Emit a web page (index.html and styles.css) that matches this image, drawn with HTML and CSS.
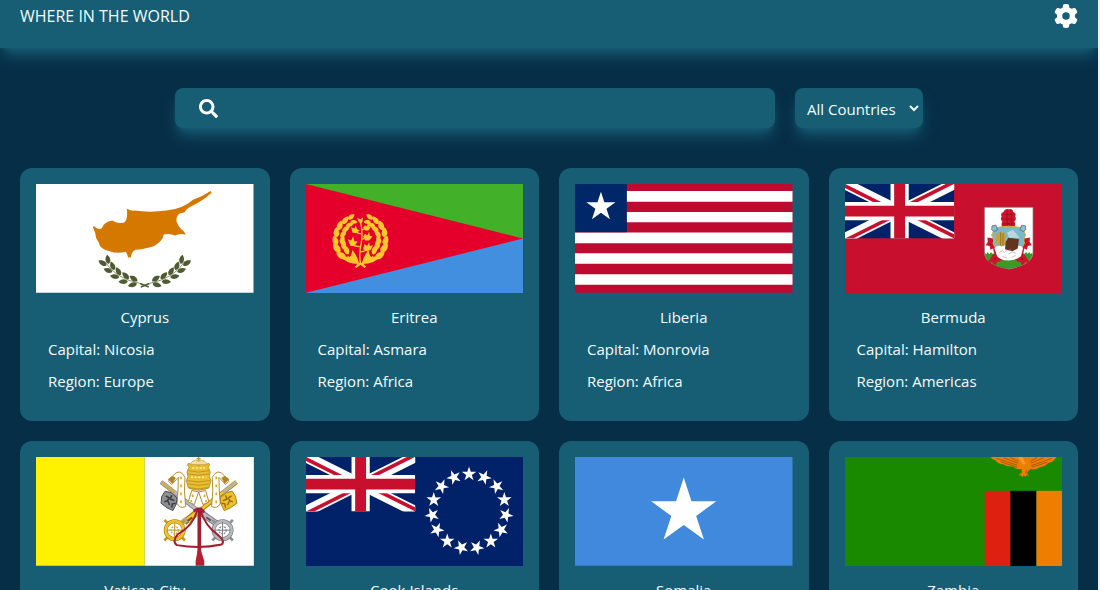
FILE: index.html
```html
<!DOCTYPE html>
<html lang="en">
<head>
<meta charset="utf-8">
<meta name="viewport" content="width=device-width, initial-scale=1">
<title>Where in the World</title>
<link rel="stylesheet" href="styles.css">
</head>
<body>
<svg class="defs" aria-hidden="true">
  <defs>
    <polygon id="star" points="0,-1 .2245,-.309 .951,-.309 .363,.118 .588,.809 0,.382 -.588,.809 -.363,.118 -.951,-.309 -.2245,-.309"/>
    <path id="leaf" d="M0 0C-10 -6 -9 -19 0 -28C9 -19 10 -6 0 0"/>
    <g id="pair">
      <use href="#leaf" transform="translate(-4 0) rotate(-24)"/>
      <use href="#leaf" transform="translate(4 0) rotate(24)"/>
    </g>
    <g id="wide-pair">
      <use href="#leaf" transform="translate(-6 2) rotate(-8) scale(1.2 1.1)"/>
      <use href="#leaf" transform="translate(6 0) rotate(30)"/>
    </g>
    <clipPath id="jack-half"><path d="M30 15h30v15zv15H0zH0V0zV0h30z"/></clipPath>
    <symbol id="jack" viewBox="0 0 60 30">
      <rect width="60" height="30" fill="#012169"/>
      <path d="M0 0L60 30M60 0L0 30" stroke="#fff" stroke-width="6"/>
      <path d="M0 0L60 30M60 0L0 30" stroke="#c8102e" stroke-width="4" clip-path="url(#jack-half)"/>
      <path d="M30 0V30M0 15H60" stroke="#fff" stroke-width="10"/>
      <path d="M30 0V30M0 15H60" stroke="#c8102e" stroke-width="6"/>
    </symbol>
  </defs>
</svg>

<header class="topbar">
  <h1 class="brand">WHERE IN THE WORLD</h1>
  <button class="settings" type="button" aria-label="Settings">
    <svg class="gear" viewBox="0 0 512 512"><path fill="currentColor" d="M495.9 166.6c3.2 8.7 .5 18.4-6.4 24.6l-43.3 39.4c1.1 8.3 1.7 16.8 1.7 25.4s-.6 17.1-1.7 25.4l43.3 39.4c6.9 6.2 9.6 15.9 6.4 24.6c-4.4 11.9-9.7 23.3-15.8 34.3l-4.7 8.1c-6.6 11-14 21.4-22.1 31.2c-5.9 7.2-15.7 9.6-24.5 6.8l-55.7-17.7c-13.4 10.3-28.2 18.9-44 25.4l-12.5 57.1c-2 9.1-9 16.3-18.2 17.8c-13.8 2.3-28 3.5-42.5 3.5s-28.7-1.2-42.5-3.5c-9.2-1.5-16.2-8.7-18.2-17.8l-12.5-57.1c-15.8-6.5-30.6-15.1-44-25.4L83.1 425.9c-8.8 2.8-18.6 .3-24.5-6.8c-8.1-9.8-15.5-20.2-22.1-31.2l-4.7-8.1c-6.1-11-11.4-22.4-15.8-34.3c-3.2-8.7-.5-18.4 6.4-24.6l43.3-39.4C64.6 273.1 64 264.6 64 256s.6-17.1 1.7-25.4L22.4 191.2c-6.9-6.2-9.6-15.9-6.4-24.6c4.4-11.9 9.7-23.3 15.8-34.3l4.7-8.1c6.6-11 14-21.4 22.1-31.2c5.9-7.2 15.7-9.6 24.5-6.8l55.7 17.7c13.4-10.3 28.2-18.9 44-25.4l12.5-57.1c2-9.1 9-16.3 18.2-17.8C227.3 1.2 241.5 0 256 0s28.7 1.2 42.5 3.5c9.2 1.5 16.2 8.7 18.2 17.8l12.5 57.1c15.8 6.5 30.6 15.1 44 25.4l55.7-17.7c8.8-2.8 18.6-.3 24.5 6.8c8.1 9.8 15.5 20.2 22.1 31.2l4.7 8.1c6.1 11 11.4 22.4 15.8 34.3zM256 336a80 80 0 1 0 0-160 80 80 0 1 0 0 160z"/></svg>
  </button>
</header>

<main>
  <form class="filters">
    <label class="search">
      <svg class="lens" viewBox="0 0 512 512" aria-hidden="true"><path fill="currentColor" d="M505 442.7L405.3 343c-4.5-4.5-10.6-7-17-7H372c27.6-35.3 44-79.7 44-128C416 93.1 322.9 0 208 0S0 93.1 0 208s93.1 208 208 208c48.3 0 92.7-16.4 128-44v16.3c0 6.4 2.5 12.5 7 17l99.7 99.7c9.4 9.4 24.6 9.4 33.9 0l28.3-28.3c9.4-9.4 9.4-24.6.1-34zM208 336c-70.7 0-128-57.2-128-128 0-70.7 57.2-128 128-128 70.7 0 128 57.2 128 128 0 70.7-57.2 128-128 128z"/></svg>
      <input class="search-input" type="text" aria-label="Search countries">
    </label>
    <div class="region">
      <select class="region-select" aria-label="Region">
        <option>All Countries</option>
        <option>Africa</option>
        <option>Americas</option>
        <option>Asia</option>
        <option>Europe</option>
        <option>Oceania</option>
      </select>
      <svg class="chevron" viewBox="0 0 10 8" aria-hidden="true"><path d="M1 2L5 6L9 2" fill="none" stroke="currentColor" stroke-width="2"/></svg>
    </div>
  </form>

  <section class="grid" aria-label="Countries">
    <article class="card">
      <svg class="flag" viewBox="48 48 654 327" preserveAspectRatio="xMidYMid slice" role="img" aria-label="Flag of Cyprus">
        <rect x="48" y="48" width="654" height="327" fill="#fff"/>
        <path fill="#d57800" d="M219 177L223 175Q233 187 245 182Q252 162 277 158Q300 170 314 163Q325 155 321 122Q330 130 345 128Q390 135 440 128Q490 122 520 95Q550 85 573 69L576 74Q550 98 515 115Q500 122 495 133L480 137Q468 145 471 162Q478 180 492 190L499 200Q480 195 466 203Q450 195 432 200Q430 220 400 236Q370 245 347 246Q333 255 334 268L325 269Q322 258 318 252Q290 258 270 250Q240 245 237 225Q226 210 226 195Z"/>
        <g transform="translate(375 215)" fill="#4e5b31">
          <g id="olive-left">
            <path d="M12 143L-14 132" fill="none" stroke="#4e5b31" stroke-width="5"/>
            <path d="M-14 132Q-90 116 -120 66" fill="none" stroke="#4e5b31" stroke-width="2"/>
            <use href="#pair" transform="rotate(-80) translate(-131 0)"/>
            <use href="#pair" transform="rotate(-68) translate(-132 0)"/>
            <use href="#pair" transform="rotate(-56) translate(-133 0)"/>
            <use href="#pair" transform="rotate(-45) translate(-134 0)"/>
            <use href="#pair" transform="rotate(-34) translate(-135 0)"/>
          </g>
          <use href="#olive-left" transform="scale(-1 1)"/>
        </g>
      </svg>
      <div class="info">
        <h2 class="name">Cyprus</h2>
        <p class="fact">Capital: Nicosia</p>
        <p class="fact">Region: Europe</p>
      </div>
    </article>

    <article class="card">
      <svg class="flag" viewBox="48 48 651 327" preserveAspectRatio="xMidYMid slice" role="img" aria-label="Flag of Eritrea">
        <rect x="48" y="48" width="654" height="164" fill="#43b02a"/>
        <rect x="48" y="212" width="654" height="164" fill="#418fde"/>
        <path d="M48 49L698 212L48 374Z" fill="#e4002b"/>
        <g transform="translate(211 216)" fill="#ffc72c">
          <g id="wreath">
            <use href="#wide-pair" transform="rotate(-50) translate(-64 0) scale(1.1)"/>
            <use href="#wide-pair" transform="rotate(-30) translate(-65 0) scale(1.1)"/>
            <use href="#wide-pair" transform="rotate(-12) translate(-66 0)"/>
            <use href="#wide-pair" transform="rotate(7) translate(-66 0)"/>
            <use href="#wide-pair" transform="rotate(25) translate(-66 0)"/>
            <use href="#wide-pair" transform="rotate(43) translate(-66 0) scale(.9)"/>
            <use href="#wide-pair" transform="rotate(60) translate(-67 0) scale(.8)"/>
            <path d="M-4 72Q-46 72 -62 46Q-44 54 -36 48Q-30 60 -24 30Q-8 50 -4 72ZM-18 80L8 66L14 80L8 80L2 73L-12 84Z"/>
          </g>
          <use href="#wreath" transform="scale(-1 1)"/>
          <path d="M0 72Q-5 40 2 12Q8 -20 0 -56M0 36Q20 34 23 24M-2 20Q-26 20 -28 6M4 -2Q20 -4 22 -14M3 -18Q-16 -20 -18 -32M3 -30Q16 -32 19 -40" fill="none" stroke="#ffc72c" stroke-width="4"/>
          <path d="M8 28L12 12L20 18L26 6L28 18L38 16L30 30L18 34ZM-38 -2L-28 2L-22 -10L-18 4L-8 4L-18 18L-30 18ZM8 -10L14 -18L20 -12L26 -24L28 -12L36 -10L26 2L14 2ZM-28 -38L-18 -34L-14 -44L-10 -32L-2 -28L-14 -20L-24 -22ZM8 -38L14 -44L18 -40L24 -52L26 -40L32 -40L24 -28L14 -28ZM-10 -66L0 -62L8 -68L6 -54L0 -48L-6 -56Z"/>
        </g>
      </svg>
      <div class="info">
        <h2 class="name">Eritrea</h2>
        <p class="fact">Capital: Asmara</p>
        <p class="fact">Region: Africa</p>
      </div>
    </article>

    <article class="card">
      <svg class="flag" viewBox="45 48 654 327" preserveAspectRatio="xMidYMid slice" role="img" aria-label="Flag of Liberia">
        <rect x="45" y="48" width="654" height="327" fill="#bf0a30"/>
        <path fill="#fff" d="M45 69h654v32H45zM45 132h654v31H45zM45 194h654v32H45zM45 256h654v32H45zM45 319h654v32H45z"/>
        <rect x="45" y="48" width="156" height="145" fill="#002868"/>
        <use href="#star" transform="translate(123 117) scale(46)" fill="#fff"/>
      </svg>
      <div class="info">
        <h2 class="name">Liberia</h2>
        <p class="fact">Capital: Monrovia</p>
        <p class="fact">Region: Africa</p>
      </div>
    </article>

    <article class="card">
      <svg class="flag" viewBox="45 48 651 327" preserveAspectRatio="xMidYMid slice" role="img" aria-label="Flag of Bermuda">
        <rect x="45" y="48" width="654" height="327" fill="#c8102e"/>
        <use href="#jack" x="45" y="48" width="327" height="164"/>
        <path d="M462 118H608V256Q606 290 535 304Q464 290 462 256Z" fill="#fff"/>
        <path d="M463 254l5 5 4-7 5 7 5-6 6 5h94l5-6 5 6 4-6 5 6 5-4q0 38-72 49q-70-11-71-49z" fill="#3c9a24"/>
        <path d="M462 118H608V256Q606 290 535 304Q464 290 462 256Z" fill="none" stroke="#6d5a50" stroke-width="2"/>
        <path d="M535 124q12-2 13 8 12 5 6 14 6 8-2 14 6 12-2 20h-32q-8-8-2-20-8-6-2-14-6-9 6-14 3-10 15-8z" fill="#cf142b"/>
        <path d="M522 140h25M520 154h30M519 168h32M530 128v48M543 132v44" stroke="#8a1020" stroke-width="2"/>
        <path d="M498 206l-10 8-14-2 1 10-5 8 10 2 2 10 8-4 4 18-10 14-8 12 10-2 8 8 6-10 14-4 6-22zM572 206l10 8 14-2-1 10 5 8-10 2-2 10-8-4-4 18 10 14 8 12-10-2-8 8-6-10-14-4-6-22z" fill="#cf142b" stroke="#cf142b" stroke-width="5"/>
        <path d="M485 218l6 12M585 218l-6 12M498 268l-8 10M572 268l8 10M478 228l4 2M592 228l-4 2" stroke="#7d1220" stroke-width="3"/>
        <path d="M494 180q41-10 82 0l10 22q-8 10-4 24l-14 26-33 16-33-16-14-26q4-14-4-24z" fill="#78b9cb" stroke="#d8ae42" stroke-width="3"/>
        <path d="M492 240q14-10 22-4l20-6 20 6q16-6 24 4l-6 24q-10 12-37 14q-27-2-35-14z" fill="#fff"/>
        <path d="M497 200q16-16 29-2l1 32-14 6-16-10z" fill="#c6a13c"/>
        <path d="M511 194v38M518 196v36" stroke="#76631f" stroke-width="2"/>
        <path d="M534 210l32 4-4 28-16 8-22-6 2-22z" fill="#65341f"/>
        <path d="M530 194l18-8 20 24-32 0z" fill="#b9d9dc"/>
        <path d="M524 250l18-4M506 254l10-6 8 8M534 258l12-6 10 4M516 266l14 4M544 268l12-6" fill="none" stroke="#b7a8a0" stroke-width="2"/>
        <path d="M485 174l12-2 4 14-10 5-7-5zM585 174l-12-2-4 14 10 5 7-5z" fill="#8fbfc9" stroke="#37626d" stroke-width="2"/>
        <path d="M484 274l10 6 16-2M586 274l-10 6-16-2" fill="none" stroke="#cf142b" stroke-width="6"/>
      </svg>
      <div class="info">
        <h2 class="name">Bermuda</h2>
        <p class="fact">Capital: Hamilton</p>
        <p class="fact">Region: Americas</p>
      </div>
    </article>

    <article class="card">
      <svg class="flag" viewBox="48 51 654 327" preserveAspectRatio="xMidYMid slice" role="img" aria-label="Flag of Vatican City">
        <rect x="48" y="51" width="327" height="327" fill="#fff200"/>
        <rect x="375" y="51" width="328" height="327" fill="#fff"/>
        <path d="M424 126L534 212" stroke="#8d8d8d" stroke-width="13"/>
        <path d="M426 127L534 211" stroke="#bcbcbc" stroke-width="8"/>
        <path d="M424 126L466 158" stroke="#cfae4c" stroke-width="9"/>
        <path d="M651 126L541 212" stroke="#a97d12" stroke-width="13"/>
        <path d="M649 127L541 211" stroke="#f3c437" stroke-width="8"/>
        <path d="M651 126L610 158" stroke="#b9b5a5" stroke-width="9"/>
        <g id="lappet" fill="#fff" stroke="#b58d2a" stroke-width="3">
          <path d="M459 108L446 124L456 134L476 112Q476 150 472 190Q480 208 498 200Q492 150 496 112Q480 82 459 108Z"/>
          <path d="M516 152L506 186L524 194L537 156Z"/>
          <path d="M446 118l12 12 9-16-9-5z" fill="#a98528"/>
          <path d="M484 110v8M484 134v8M484 158v8M484 182v8M519 164v8M515 180v6" stroke="#d9a91f" stroke-width="5"/>
        </g>
        <use href="#lappet" transform="translate(1074 0) scale(-1 1)"/>
        <path d="M436 154l18 4 18 16-2 18-10 20-18-8-18-14 2-20z" fill="#8e8f93" stroke="#4b4c50" stroke-width="3"/>
        <path d="M438 168l10 6-6 10M456 166l-4 12 12 4M434 186l10-4 6 14M456 204l2-12 10-2" fill="none" stroke="#3f4044" stroke-width="5"/>
        <path d="M638 154l-18 4-18 16 2 18 10 20 18-8 20-14-4-20z" fill="#efc02a" stroke="#a87e13" stroke-width="3"/>
        <path d="M636 168l-10 6 6 10M618 166l4 12-12 4M640 186l-10-4-6 14M618 204l-2-12-10-2" fill="none" stroke="#8e6910" stroke-width="4"/>
        <path d="M508 82q-8-10 0-12l8 5 10-4 11 5 11-5 10 4 8-5q8 2 0 12l6 14-3 14 5 12-6 22q-31 14-62 0l-6-22 5-12-3-14z" fill="#e8bd30" stroke="#9a7515" stroke-width="2"/>
        <path d="M512 74q3-14 25-14t25 14z" fill="#f3dda0" stroke="#c19a2b" stroke-width="2"/>
        <path d="M506 92q31 9 62 0M504 102q33 8 66 0M503 122q34 8 68 0M505 132q32 8 64 0M508 143q29 8 58 0" fill="none" stroke="#a9831b" stroke-width="2"/>
        <path d="M514 112h46M518 84h38" stroke="#fff0ae" stroke-width="5" stroke-dasharray="6 5"/>
        <path d="M537 51v14M531 56h12" stroke="#c79a1f" stroke-width="4"/>
        <path d="M528 220L494 248" stroke="#a57b12" stroke-width="19"/>
        <path d="M528 222L504 242" stroke="#f3c437" stroke-width="15"/>
        <path d="M500 238L484 252" stroke="#aeb0b4" stroke-width="16"/>
        <path d="M504 243l14-10" stroke="#6c5113" stroke-width="6"/>
        <path d="M546 220L592 252" stroke="#77797d" stroke-width="19"/>
        <path d="M548 222L590 250" stroke="#babcc0" stroke-width="14"/>
        <path d="M560 232l14 10" stroke="#55575c" stroke-width="6"/>
        <g fill="none">
          <path d="M434 240l14 14M496 240l-14 14M434 302l14-14M496 302l-14-14" stroke="#c7981d" stroke-width="8"/>
          <circle cx="465" cy="271" r="27" stroke="#a57b12" stroke-width="12"/>
          <circle cx="465" cy="271" r="27" stroke="#f0c12e" stroke-width="9"/>
          <path d="M465 246v50M440 271h50" stroke="#bd942a" stroke-width="3"/>
          <circle cx="465" cy="271" r="11" stroke="#d1a42d" stroke-width="4" stroke-dasharray="5 3"/>
          <path d="M578 240l14 14M640 240l-14 14M578 302l14-14M640 302l-14-14" stroke="#8e9094" stroke-width="8"/>
          <circle cx="609" cy="271" r="27" stroke="#707276" stroke-width="12"/>
          <circle cx="609" cy="271" r="27" stroke="#b6b8bc" stroke-width="9"/>
          <path d="M609 246v50M584 271h50" stroke="#7b7d81" stroke-width="3"/>
          <circle cx="609" cy="271" r="11" stroke="#85878b" stroke-width="4" stroke-dasharray="5 3"/>
          <path d="M533 212Q520 258 474 284Q456 306 472 316Q540 328 606 314Q618 304 596 286Q556 258 543 212" stroke="#a31e31" stroke-width="6"/>
          <path d="M522 214l12-7h10l10 10" stroke="#a31e31" stroke-width="8"/>
          <path d="M539 208V350" stroke="#a31e31" stroke-width="11"/>
        </g>
        <path d="M534 332h10l10 32v14h-26v-14z" fill="#b51f33"/>
      </svg>
      <div class="info">
        <h2 class="name">Vatican City</h2>
        <p class="fact">Capital: Vatican City</p>
        <p class="fact">Region: Europe</p>
      </div>
    </article>

    <article class="card">
      <svg class="flag" viewBox="48 51 651 327" preserveAspectRatio="xMidYMid slice" role="img" aria-label="Flag of Cook Islands">
        <rect x="48" y="51" width="654" height="327" fill="#012169"/>
        <use href="#jack" x="48" y="51" width="327" height="164"/>
        <g transform="translate(536 214)" fill="#fff">
          <use href="#star" transform="translate(0 -111) scale(23)"/>
          <use href="#star" transform="rotate(24) translate(0 -111) scale(23)"/>
          <use href="#star" transform="rotate(48) translate(0 -111) scale(23)"/>
          <use href="#star" transform="rotate(72) translate(0 -111) scale(23)"/>
          <use href="#star" transform="rotate(96) translate(0 -111) scale(23)"/>
          <use href="#star" transform="rotate(120) translate(0 -111) scale(23)"/>
          <use href="#star" transform="rotate(144) translate(0 -111) scale(23)"/>
          <use href="#star" transform="rotate(168) translate(0 -111) scale(23)"/>
          <use href="#star" transform="rotate(192) translate(0 -111) scale(23)"/>
          <use href="#star" transform="rotate(216) translate(0 -111) scale(23)"/>
          <use href="#star" transform="rotate(240) translate(0 -111) scale(23)"/>
          <use href="#star" transform="rotate(264) translate(0 -111) scale(23)"/>
          <use href="#star" transform="rotate(288) translate(0 -111) scale(23)"/>
          <use href="#star" transform="rotate(312) translate(0 -111) scale(23)"/>
          <use href="#star" transform="rotate(336) translate(0 -111) scale(23)"/>
        </g>
      </svg>
      <div class="info">
        <h2 class="name">Cook Islands</h2>
        <p class="fact">Capital: Avarua</p>
        <p class="fact">Region: Oceania</p>
      </div>
    </article>

    <article class="card">
      <svg class="flag" viewBox="0 0 654 327" preserveAspectRatio="xMidYMid slice" role="img" aria-label="Flag of Somalia">
        <rect width="654" height="327" fill="#4189dd"/>
        <use href="#star" transform="translate(327 165) scale(103)" fill="#fff"/>
      </svg>
      <div class="info">
        <h2 class="name">Somalia</h2>
        <p class="fact">Capital: Mogadishu</p>
        <p class="fact">Region: Africa</p>
      </div>
    </article>

    <article class="card">
      <svg class="flag" viewBox="45 51 651 327" preserveAspectRatio="xMidYMid slice" role="img" aria-label="Flag of Zambia">
        <rect x="45" y="51" width="654" height="327" fill="#198a00"/>
        <rect x="463" y="153" width="78" height="226" fill="#de2010"/>
        <rect x="540" y="153" width="78" height="226"/>
        <rect x="618" y="153" width="80" height="226" fill="#ef7d00"/>
        <path fill="#ef7d00" d="M480 51H678Q670 66 654 70Q644 80 630 82Q616 92 600 88L592 96L590 102L596 108L588 106L584 111L580 106L576 112L572 106L564 108L570 102L574 88Q556 90 548 80Q530 82 520 74Q502 72 496 62Q484 58 480 51Z"/>
        <path d="M498 56l62 20M520 54l42 16M540 53l24 12M664 56l-62 22M640 54l-38 16M620 53l-20 12M510 66l50 16M650 68l-46 14M574 92l-2 10M588 92l-2 10" stroke="#8c4a0a" stroke-width="2"/>
        <path d="M562 51l16 24 8-2-10-22z" fill="#f79a2c"/>
      </svg>
      <div class="info">
        <h2 class="name">Zambia</h2>
        <p class="fact">Capital: Lusaka</p>
        <p class="fact">Region: Africa</p>
      </div>
    </article>
  </section>
</main>
</body>
</html>
```
FILE: styles.css
```css
* {
  box-sizing: border-box;
}

html {
  background: #f0f2f4;
  scrollbar-width: none;
}

body {
  margin: 0 2px 0 0;
  background: #072e47;
  color: #f4fbfd;
  font: 15px/24px "Segoe UI", "Open Sans", "Noto Sans", sans-serif;
}

h1, h2, p {
  margin: 0;
  font-size: inherit;
  font-weight: 400;
}

.defs {
  position: absolute;
  width: 0;
  height: 0;
}

.topbar,
.search,
.region {
  background: #175e75;
  box-shadow: 0 10px 15px -3px #175e75, 0 4px 6px -4px #175e75;
}

.topbar {
  display: flex;
  justify-content: space-between;
  align-items: center;
  padding: 4px 20px 20px;
}

.brand {
  font-size: 16px;
}

.settings {
  display: flex;
  padding: 0;
  border: 0;
  background: none;
  color: #fff;
  cursor: pointer;
}

.gear {
  width: 24px;
  height: 24px;
}

.filters {
  display: flex;
  justify-content: center;
  gap: 20px;
  padding: 40px 20px;
}

.search {
  display: flex;
  align-items: center;
  gap: 16px;
  flex: 0 1 600px;
  min-width: 0;
  height: 40px;
  padding: 0 24px;
  border-radius: 8px;
}

.lens {
  flex: none;
  width: 19px;
  height: 19px;
  color: #fff;
}

.search-input {
  flex: 1;
  min-width: 0;
  height: 100%;
  padding: 0;
  border: 0;
  outline: 0;
  background: none;
  color: inherit;
  font: inherit;
}

.region {
  display: grid;
  flex: none;
  align-items: center;
  width: 128px;
  height: 40px;
  border-radius: 8px;
}

.region-select,
.chevron {
  grid-area: 1 / 1;
}

.region-select {
  width: 100%;
  height: 40px;
  padding: 2px 24px 0 12px;
  border: 0;
  outline: 0;
  appearance: none;
  background: none;
  color: inherit;
  font: inherit;
}

.chevron {
  justify-self: end;
  width: 10px;
  height: 8px;
  margin-right: 4px;
  pointer-events: none;
}

.grid {
  display: grid;
  grid-template-columns: repeat(4, minmax(0, 1fr));
  gap: 20px;
  padding: 0 20px 20px;
}

.card {
  padding: 16px;
  border-radius: 12px;
  background: #175e75;
}

.flag {
  display: block;
  width: 100%;
  aspect-ratio: 2 / 1;
}

.info {
  display: grid;
  gap: 8px;
  padding: 12px;
}

.name {
  text-align: center;
}

@media (max-width: 800px) {
  .grid {
    grid-template-columns: repeat(2, minmax(0, 1fr));
  }
}
```
